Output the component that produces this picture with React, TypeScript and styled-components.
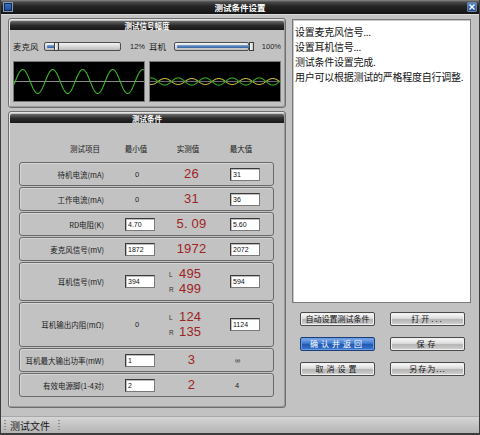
import React from "react";
import styled, { createGlobalStyle } from "styled-components";

const CJK = `"Noto Sans CJK SC", "Liberation Sans", sans-serif`;
const NUM = `"Liberation Sans", "DejaVu Sans", sans-serif`;

const GlobalStyle = createGlobalStyle`
  html, body {
    margin: 0;
    padding: 0;
    background: #c2c2c2;
  }
  * { box-sizing: border-box; }
`;

const Window = styled.div`
  width: 480px;
  height: 435px;
  display: flex;
  flex-direction: column;
  background: #c2c2c2;
  border-left: 1px solid #3c3c3c;
  border-right: 1px solid #3c3c3c;
  border-bottom: 2px solid #3c3c3c;
  font-family: ${CJK};
  overflow: hidden;
`;

const TitleBar = styled.div`
  height: 14px;
  flex: none;
  display: flex;
  align-items: center;
  justify-content: space-between;
  padding: 0 2px;
  background: linear-gradient(#8c8c8c 0, #4a4a4a 2px, #262626 6px, #141414 100%);
`;

const TitleText = styled.div`
  color: #fff;
  font-size: 8.5px;
  font-weight: bold;
  line-height: 14px;
`;

const SysIcon = styled.div`
  width: 10px;
  height: 10px;
  border: 1px solid #8a9ab0;
  background: linear-gradient(#3a78c8, #1c4a90);
  box-shadow: inset 0 0 0 1px #0e2a58;
`;

const CloseBtn = styled.div`
  width: 10px;
  height: 10px;
  border: 1px solid #6d7f9a;
  border-radius: 1px;
  background: linear-gradient(#4f86cc, #1f4c94);
  display: flex;
  align-items: center;
  justify-content: center;
`;

const Body = styled.div`
  height: 402px;
  flex: none;
  display: flex;
  gap: 6px;
  padding: 3px 8px 0 7px;
  border-top: 1px solid #dadada;
`;

const LeftCol = styled.div`
  width: 278px;
  display: flex;
  flex-direction: column;
  gap: 3px;
`;

const RightCol = styled.div`
  width: 179px;
  display: flex;
  flex-direction: column;
`;

const Panel = styled.div<{ $h: number }>`
  height: ${(p) => p.$h}px;
  border: 1px solid #6e6e6e;
  border-radius: 3px;
  box-shadow: inset 1px 1px 0 #e4e4e4, inset -1px -1px 0 #9a9a9a;
  padding: 2px 1px 0;
  display: flex;
  flex-direction: column;
`;

const PanelHeader = styled.div`
  height: 9px;
  flex: none;
  border-radius: 2px 2px 0 0;
  background: linear-gradient(#6a6a6a, #2a2a2a 50%, #181818);
  color: #fff;
  font-size: 7.5px;
  font-weight: bold;
  line-height: 9px;
  text-align: center;
`;

const SliderRow = styled.div`
  display: grid;
  grid-template-columns: 132px 132px;
  gap: 4px;
  padding: 12px 0 0 3px;
  height: 31px;
`;

const SliderGroup = styled.div<{ $labelW: number; $gap: number }>`
  display: grid;
  grid-template-columns: ${(p) => p.$labelW}px 1fr auto;
  column-gap: ${(p) => p.$gap}px;
  align-items: center;
  height: 9px;
`;

const SliderLabel = styled.span`
  font-size: 8.5px;
  color: #1a1a1a;
  white-space: nowrap;
  line-height: 9px;
`;

const Pct = styled.span`
  font-family: ${NUM};
  font-size: 7.5px;
  color: #222;
  padding-left: 5px;
`;

const Track = styled.div`
  position: relative;
  height: 9px;
  border: 1px solid #4e4e4e;
  border-radius: 2px;
  background: linear-gradient(#f4f4f4, #d8d8d8 50%, #bcbcbc);
`;

const TrackFill = styled.div`
  position: absolute;
  left: 2px;
  top: 2px;
  height: 3px;
  background: linear-gradient(#7ea6d8, #2f5f9e);
  border-radius: 1px;
`;

const Thumb = styled.div`
  position: absolute;
  top: -1px;
  width: 5px;
  height: 9px;
  border: 1px solid #3e3e3e;
  background: linear-gradient(90deg, #fafafa, #c8c8c8);
`;

const WaveRow = styled.div`
  display: grid;
  grid-template-columns: 132px 132px;
  gap: 4px;
  padding-left: 3px;
`;

const Scope = styled.div`
  height: 41px;
  background: #000;
  border: 1px solid #7a7a7a;
  overflow: hidden;
`;

const ColHeads = styled.div`
  display: grid;
  grid-template-columns: 80px 21px 30px 15px 44px 16px 30px;
  margin: 18px 0 0 10px;
  height: 15px;
  font-size: 7.5px;
  color: #1a1a1a;
  align-items: center;
`;

const HeadCell = styled.span<{ $col: number; $align?: string }>`
  grid-column: ${(p) => p.$col};
  text-align: ${(p) => p.$align || "center"};
  white-space: nowrap;
`;

const Rows = styled.div`
  margin: 6px 10px 0 9px;
  display: flex;
  flex-direction: column;
  gap: 1px;
`;

const Row = styled.div<{ $h: number }>`
  height: ${(p) => p.$h}px;
  border: 1px solid #6a6a6a;
  border-radius: 3px;
  box-shadow: inset 1px 1px 0 #d6d6d6;
  display: grid;
  grid-template-columns: 84px 21px 30px 14px 45px 16px 30px;
  align-items: center;
`;

const Label = styled.span`
  grid-column: 1;
  text-align: right;
  font-size: 7.5px;
  color: #1a1a1a;
  white-space: nowrap;
`;

const Plain = styled.span<{ $col: number; $shift?: number }>`
  grid-column: ${(p) => p.$col};
  font-family: ${NUM};
  font-size: 7.5px;
  color: #222;
  padding-left: ${(p) => p.$shift ?? 10}px;
`;

const Field = styled.div<{ $col: number }>`
  grid-column: ${(p) => p.$col};
  height: 13px;
  background: #fff;
  border: 1px solid #7a7a7a;
  border-top-color: #3a3a3a;
  border-left-color: #3a3a3a;
  box-shadow: inset 1px 1px 0 #bdbdbd;
  font-family: ${NUM};
  font-size: 7px;
  line-height: 11px;
  padding-left: 2px;
  color: #111;
`;

const Measured = styled.div`
  grid-column: 5;
  display: flex;
  flex-direction: column;
  align-items: center;
  gap: 1px;
`;

const Big = styled.span`
  font-family: ${NUM};
  font-size: 13px;
  line-height: 14px;
  color: #9e2424;
  letter-spacing: 0.2px;
`;

const Dual = styled.div`
  display: flex;
  align-items: center;
  width: 100%;
`;

const Side = styled.span`
  font-family: ${NUM};
  font-size: 6.5px;
  color: #333;
  width: 10px;
`;

const TextBox = styled.div`
  margin-top: 1px;
  height: 284px;
  background: #fff;
  border: 1px solid #7a7a7a;
  box-shadow: inset 1px 1px 0 #c8c8c8;
  padding: 4px 2px;
  font-size: 10px;
  line-height: 15px;
  color: #141414;
  white-space: nowrap;
  letter-spacing: -0.25px;
`;

const Buttons = styled.div`
  margin: 9px 0 0 8px;
  display: grid;
  grid-template-columns: 75px 75px;
  column-gap: 15px;
  row-gap: 11px;
`;

const Btn = styled.div<{ $primary?: boolean; $spacing?: number }>`
  height: 14px;
  border: 1px solid ${(p) => (p.$primary ? "#1b3f78" : "#4a4a4a")};
  border-radius: 2px;
  background: ${(p) =>
    p.$primary
      ? "linear-gradient(#8cb4ec, #3c78d0 45%, #2058b0 55%, #3e7ad2)"
      : "linear-gradient(#fbfbfb, #dcdcdc 45%, #b4b4b4 55%, #d4d4d4)"};
  box-shadow: inset 0 0 0 1px ${(p) => (p.$primary ? "#6b9ae0" : "#f0f0f0")};
  color: ${(p) => (p.$primary ? "#fff" : "#141414")};
  font-size: 8px;
  line-height: 12px;
  text-align: center;
  letter-spacing: ${(p) => p.$spacing ?? 0}px;
  white-space: nowrap;
`;

const StatusBar = styled.div`
  height: 17px;
  flex: none;
  margin-top: auto;
  display: flex;
  align-items: center;
  background: linear-gradient(#d6d6d6, #c8c8c8 40%, #b4b4b4);
  border-top: 1px solid #a8a8a8;
  font-size: 10px;
  color: #1a1a1a;
`;

const Grip = styled.div<{ $left?: number }>`
  width: 2px;
  height: 11px;
  margin: 0 4px 0 ${(p) => p.$left ?? 3}px;
  background: repeating-linear-gradient(#8a8a8a 0 1px, transparent 1px 3px);
`;

const wave = (w: number, cy: number, amp: number, period: number, phase: number) => {
  let d = "";
  for (let x = 0; x <= w; x += 0.5) {
    const y = cy - amp * Math.sin((2 * Math.PI * (x - phase)) / period);
    d += `${x === 0 ? "M" : "L"}${x.toFixed(1)},${y.toFixed(2)} `;
  }
  return d;
};

const rows = [
  { label: "待机电流(mA)", min: "0", val: "26", max: "31", h: 24 },
  { label: "工作电流(mA)", min: "0", val: "31", max: "36", h: 24 },
  { label: "RD电阻(K)", minField: "4.70", val: "5. 09", max: "5.60", h: 24 },
  { label: "麦克风信号(mV)", minField: "1872", val: "1972", max: "2072", h: 24 },
  { label: "耳机信号(mV)", minField: "394", l: "495", r: "499", max: "594", h: 39 },
  { label: "耳机输出内阻(mΩ)", min: "0", l: "124", r: "135", max: "1124", h: 45 },
  { label: "耳机最大输出功率(mW)", minField: "1", val: "3", maxText: "∞", h: 24 },
  { label: "有效电源脚(1-4对)", minField: "2", val: "2", maxText: "4", h: 24 },
];

const App = () => {
  return (
    <Window>
      <GlobalStyle />
      <TitleBar>
        <SysIcon />
        <TitleText>测试条件设置</TitleText>
        <CloseBtn>
          <svg width="6" height="6" viewBox="0 0 6 6">
            <path d="M0.5 0.5 L5.5 5.5 M5.5 0.5 L0.5 5.5" stroke="#fff" strokeWidth="1.3" />
          </svg>
        </CloseBtn>
      </TitleBar>

      <Body>
        <LeftCol>
          <Panel $h={90}>
            <PanelHeader>测试信号幅度</PanelHeader>
            <SliderRow>
              <SliderGroup $labelW={27} $gap={4}>
                <SliderLabel>麦克风</SliderLabel>
                <Track>
                  <TrackFill style={{ width: "10px" }} />
                  <Thumb style={{ left: "9px" }} />
                </Track>
                <Pct>12%</Pct>
              </SliderGroup>
              <SliderGroup $labelW={17} $gap={8}>
                <SliderLabel>耳机</SliderLabel>
                <Track>
                  <TrackFill style={{ width: "74px" }} />
                  <Thumb style={{ left: "74px" }} />
                </Track>
                <Pct>100%</Pct>
              </SliderGroup>
            </SliderRow>
            <WaveRow>
              <Scope>
                <svg width="130" height="39" viewBox="0 0 130 39">
                  <line x1="0" y1="19.5" x2="130" y2="19.5" stroke="#8a8a8a" strokeWidth="1" />
                  <path d={wave(130, 19.5, 12, 30, 1.2)} fill="none" stroke="#3cb52a" strokeWidth="1.1" />
                </svg>
              </Scope>
              <Scope>
                <svg width="130" height="39" viewBox="0 0 130 39">
                  <line x1="0" y1="19.5" x2="130" y2="19.5" stroke="#6a6a6a" strokeWidth="1" />
                  <path d={wave(130, 19.5, 3, 27, 8)} fill="none" stroke="#b8b02a" strokeWidth="1.1" />
                  <path d={wave(130, 19.5, 3.6, 27, 21.5)} fill="none" stroke="#2fa824" strokeWidth="1.1" />
                </svg>
              </Scope>
            </WaveRow>
          </Panel>

          <Panel $h={297}>
            <PanelHeader>测试条件</PanelHeader>
            <ColHeads>
              <HeadCell $col={1} $align="right">测试项目</HeadCell>
              <HeadCell $col={3}>最小值</HeadCell>
              <HeadCell $col={5}>实测值</HeadCell>
              <HeadCell $col={7}>最大值</HeadCell>
            </ColHeads>
            <Rows>
              {rows.map((r) => (
                <Row key={r.label} $h={r.h}>
                  <Label>{r.label}</Label>
                  {r.minField ? <Field $col={3}>{r.minField}</Field> : <Plain $col={3}>{r.min}</Plain>}
                  <Measured>
                    {r.val ? (
                      <Big>{r.val}</Big>
                    ) : (
                      <>
                        <Dual>
                          <Side>L</Side>
                          <Big>{r.l}</Big>
                        </Dual>
                        <Dual>
                          <Side>R</Side>
                          <Big>{r.r}</Big>
                        </Dual>
                      </>
                    )}
                  </Measured>
                  {r.max ? <Field $col={7}>{r.max}</Field> : <Plain $col={7} $shift={5}>{r.maxText}</Plain>}
                </Row>
              ))}
            </Rows>
          </Panel>
        </LeftCol>

        <RightCol>
          <TextBox>
            <div>设置麦克风信号...</div>
            <div>设置耳机信号...</div>
            <div>测试条件设置完成.</div>
            <div>用户可以根据测试的严格程度自行调整.</div>
          </TextBox>
          <Buttons>
            <Btn>自动设置测试条件</Btn>
            <Btn $spacing={2}>打开...</Btn>
            <Btn $primary $spacing={3}>确认并返回</Btn>
            <Btn $spacing={3}>保存</Btn>
            <Btn $spacing={3}>取消设置</Btn>
            <Btn $spacing={1}>另存为...</Btn>
          </Buttons>
        </RightCol>
      </Body>

      <StatusBar>
        <Grip />
        <span>测试文件</span>
        <Grip $left={8} />
      </StatusBar>
    </Window>
  );
};

export default App;
